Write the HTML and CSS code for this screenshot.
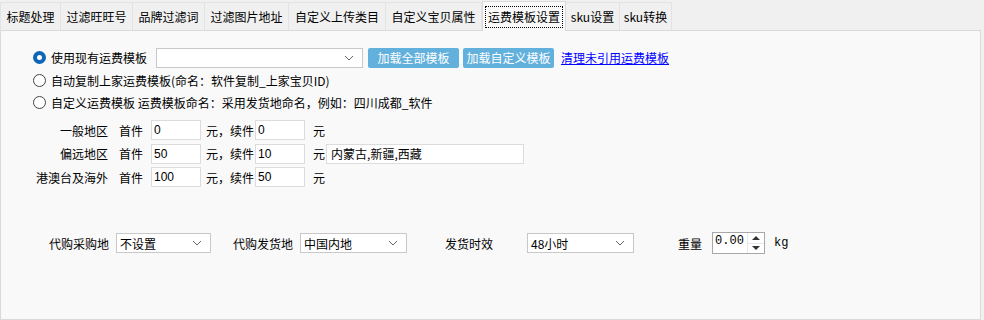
FILE: index.html
```html
<!DOCTYPE html>
<html lang="zh-CN">
<head>
    <meta charset="UTF-8">
    <title>运费模板设置</title>
    <link rel="stylesheet" href="styles.css">
</head>
<body>
    <div class="tabs">
        <div class="tabs__item" style="width:61px">标题处理</div>
        <div class="tabs__item" style="width:72px">过滤旺旺号</div>
        <div class="tabs__item" style="width:72px">品牌过滤词</div>
        <div class="tabs__item" style="width:84px">过滤图片地址</div>
        <div class="tabs__item" style="width:97px">自定义上传类目</div>
        <div class="tabs__item" style="width:96px">自定义宝贝属性</div>
        <div class="tabs__item tabs__item--on" style="width:84px"><span class="tabs__focus">运费模板设置</span></div>
        <div class="tabs__item" style="width:54px">sku设置</div>
        <div class="tabs__item" style="width:52px">sku转换</div>
    </div>

    <div class="panel">
        <div class="opt">
            <span class="radio radio--on"></span>
            <span class="opt__text">使用现有运费模板</span>
            <div class="sel sel--tpl"><span></span><svg width="10" height="6" viewBox="0 0 10 6"><path d="M1 1 L5 5 L9 1" fill="none" stroke="#666" stroke-width="1"/></svg></div>
            <button class="btn">加载全部模板</button>
            <button class="btn">加载自定义模板</button>
            <a class="link" href="#">清理未引用运费模板</a>
        </div>
        <div class="opt opt--2">
            <span class="radio"></span>
            <span class="opt__text">自动复制上家运费模板(命名：软件复制_上家宝贝ID)</span>
        </div>
        <div class="opt opt--3">
            <span class="radio"></span>
            <span class="opt__text">自定义运费模板 运费模板命名：采用发货地命名，例如：四川成都_软件</span>
        </div>

        <div class="fee">
            <div class="fee__row">
                <span class="fee__label">一般地区</span>
                <span class="fee__t1">首件</span>
                <input class="fee__in" value="0">
                <span class="fee__t2">元，续件</span>
                <input class="fee__in" value="0">
                <span class="fee__t3">元</span>
            </div>
            <div class="fee__row">
                <span class="fee__label">偏远地区</span>
                <span class="fee__t1">首件</span>
                <input class="fee__in" value="50">
                <span class="fee__t2">元，续件</span>
                <input class="fee__in" value="10">
                <span class="fee__t3">元</span>
                <input class="fee__area" value="内蒙古,新疆,西藏">
            </div>
            <div class="fee__row">
                <span class="fee__label">港澳台及海外</span>
                <span class="fee__t1">首件</span>
                <input class="fee__in" value="100">
                <span class="fee__t2">元，续件</span>
                <input class="fee__in" value="50">
                <span class="fee__t3">元</span>
            </div>
        </div>

        <div class="misc">
            <span class="misc__label misc__label--a">代购采购地</span>
            <div class="sel sel--a"><span>不设置</span><svg width="10" height="6" viewBox="0 0 10 6"><path d="M1 1 L5 5 L9 1" fill="none" stroke="#666" stroke-width="1"/></svg></div>
            <span class="misc__label misc__label--b">代购发货地</span>
            <div class="sel sel--b"><span>中国内地</span><svg width="10" height="6" viewBox="0 0 10 6"><path d="M1 1 L5 5 L9 1" fill="none" stroke="#666" stroke-width="1"/></svg></div>
            <span class="misc__label misc__label--c">发货时效</span>
            <div class="sel sel--c"><span>48小时</span><svg width="10" height="6" viewBox="0 0 10 6"><path d="M1 1 L5 5 L9 1" fill="none" stroke="#666" stroke-width="1"/></svg></div>
            <span class="misc__label misc__label--d">重量</span>
            <div class="spin">
                <span class="spin__val">0.00</span>
                <div class="spin__btns">
                    <span class="spin__up"></span>
                    <span class="spin__down"></span>
                </div>
            </div>
            <span class="misc__unit">kg</span>
        </div>
    </div>
</body>
</html>
```

FILE: styles.css
```css
html, body {
    margin: 0;
    background-color: #f0f0f0;
    font-family: "Noto Sans CJK SC", "Noto Sans", sans-serif;
    font-size: 12px;
    color: #000;
}

.tabs {
    display: flex;
    height: 30px;
    align-items: flex-end;
}

.tabs__item {
    box-sizing: border-box;
    height: 28px;
    display: flex;
    align-items: center;
    justify-content: center;
    background-color: #f0f0f0;
    border: 1px solid #e3e3e3;
    border-bottom: none;
    border-left: none;
    white-space: nowrap;
}

.tabs__item:first-child {
    border-left: 1px solid #e3e3e3;
}

.tabs__item--on {
    height: 30px;
    background-color: #f9f9f9;
    border: 1px solid #dadada;
    border-bottom: none;
    position: relative;
    top: 1px;
}

.tabs__focus {
    border: 1px dotted #000;
    padding: 2px 2px;
    line-height: 16px;
}

.panel {
    box-sizing: border-box;
    height: 290px;
    margin-right: 3px;
    border: 1px solid #dadada;
    background-color: #f9f9f9;
    padding: 16px 0 0 32px;
}

.opt {
    display: flex;
    align-items: center;
    height: 21px;
}

.opt--2 {
    margin-top: 2px;
}

.opt--3 {
    margin-top: 1px;
}

.opt__text {
    margin-left: 5px;
    white-space: nowrap;
}

.radio {
    box-sizing: border-box;
    width: 13px;
    height: 13px;
    border-radius: 50%;
    border: 1px solid #444;
    background-color: #fff;
}

.radio--on {
    border: 4px solid #0f65b8;
    background-color: #fff;
}

.sel {
    box-sizing: border-box;
    height: 20px;
    display: flex;
    align-items: center;
    justify-content: space-between;
    padding: 0 8px 0 3px;
    border: 1px solid #c8c8c8;
    background-color: #fff;
}

.sel--tpl {
    width: 207px;
    margin-left: 9px;
}

.btn {
    height: 20px;
    width: 91px;
    margin-left: 5px;
    padding: 0;
    border: none;
    border-radius: 2px;
    background-color: #62b0dc;
    color: #fff;
    font-family: inherit;
    font-size: 12px;
}

.btn + .btn {
    margin-left: 4px;
}

.link {
    margin-left: 7px;
    color: #0000ff;
    text-decoration: underline;
}

.fee {
    margin-top: 7px;
    margin-left: -32px;
    display: flex;
    flex-direction: column;
    gap: 3.5px;
}

.fee__row {
    display: flex;
    align-items: center;
    height: 20px;
}

.fee__label {
    width: 107px;
    text-align: right;
}

.fee__t1 {
    margin-left: 11px;
}

.fee__in {
    box-sizing: border-box;
    width: 50px;
    height: 20px;
    margin-left: 8px;
    padding: 0 2px;
    border: 1px solid #dcdcdc;
    background-color: #fff;
    font-family: "Liberation Sans", sans-serif;
    font-size: 12px;
    align-self: flex-start;
}

.fee__t2 {
    margin: 0 1px 0 5px;
}

.fee__t2 + .fee__in {
    margin-left: 0;
}

.fee__t3 {
    margin-left: 8px;
}

.fee__area {
    box-sizing: border-box;
    width: 198px;
    height: 20px;
    margin-left: 1px;
    padding: 0 4px;
    border: 1px solid #dcdcdc;
    background-color: #fff;
    font-family: inherit;
    font-size: 12px;
}

.misc {
    display: flex;
    align-items: center;
    height: 22px;
    margin-top: 45px;
}

.misc__label--a { margin-left: 16px; }
.misc__label--b { margin-left: 22px; }
.misc__label--c { margin-left: 38px; }
.misc__label--d { margin-left: 44px; }

.sel--a { width: 95px; margin-left: 7px; }
.sel--b { width: 107px; margin-left: 7px; }
.sel--c { width: 107px; margin-left: 34px; }

.spin {
    box-sizing: border-box;
    width: 53px;
    height: 22px;
    margin-left: 10px;
    display: flex;
    border: 1px solid #a8a8a8;
    background-color: #fff;
}

.spin__val {
    flex: 1;
    padding: 1px 0 0 2px;
    font-family: "Liberation Mono", monospace;
    font-size: 12px;
}

.spin__btns {
    width: 16px;
    display: flex;
    flex-direction: column;
    border-left: 1px solid #e8e8e8;
}

.spin__up, .spin__down {
    flex: 1;
    display: flex;
    align-items: center;
    justify-content: center;
}

.spin__up::after {
    content: "";
    border-left: 4px solid transparent;
    border-right: 4px solid transparent;
    border-bottom: 4px solid #333;
}

.spin__down {
    border-top: 1px solid #e8e8e8;
}

.spin__down::after {
    content: "";
    border-left: 4px solid transparent;
    border-right: 4px solid transparent;
    border-top: 4px solid #333;
}

.misc__unit {
    margin-left: 9px;
    font-family: "Liberation Mono", monospace;
    font-size: 12px;
}
```
